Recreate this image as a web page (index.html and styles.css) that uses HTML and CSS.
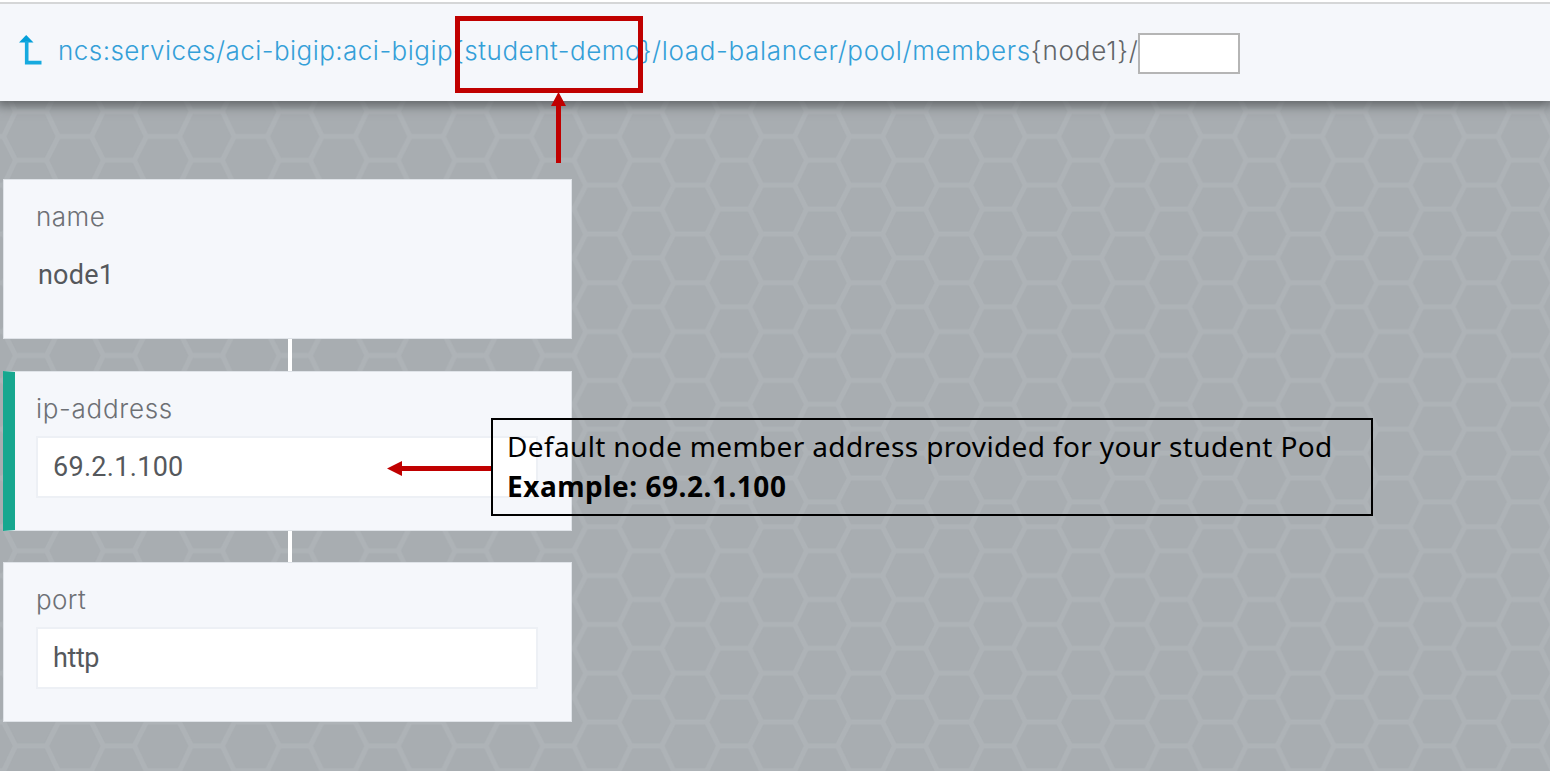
FILE: index.html
```html
<!DOCTYPE html>
<html lang="en">
<head>
<meta charset="utf-8">
<title>members node1</title>
<link rel="stylesheet" href="styles.css">
</head>
<body>
<div class="page">
  <svg class="honeycomb" width="1550" height="771" aria-hidden="true">
    <defs>
      <pattern id="hex" x="-12.95" y="160.3" width="87.9" height="48.8" patternUnits="userSpaceOnUse">
        <path d="M28.5 0H59.4M28.5 48.8H59.4M28.5 0L16.5 25L28.5 48.8M59.4 0L71.4 25L59.4 48.8M0 25H16.5M71.4 25H87.9" fill="none" stroke="#aeb3b7" stroke-width="5"/>
      </pattern>
    </defs>
    <rect width="1550" height="771" fill="url(#hex)"/>
  </svg>
  <header class="topbar">
    <svg class="up" width="24" height="32" viewBox="0 0 24 32"><path d="M0 7.5L7.2 0L14.5 7.5Z" fill="#049fd9"/><path d="M7.7 6V27.6H22.5" fill="none" stroke="#16aadf" stroke-width="3.6"/></svg>
    <div class="path"><a class="link l1">ncs:services/aci-bigip:aci-bigip</a><a class="link l2">{student-demo}</a><a class="link l3">/load-balancer/pool/members</a><span class="current">{node1}/</span></div>
    <input class="entry" aria-label="path">
  </header>
  <main class="cards">
    <section class="card">
      <div class="label name">name</div>
      <div class="value plain">node1</div>
    </section>
    <div class="connector"></div>
    <section class="card changed">
      <div class="label ip">ip-address</div>
      <div class="value field"><span class="address">69.2.1.100</span></div>
    </section>
    <div class="connector"></div>
    <section class="card">
      <div class="label port">port</div>
      <div class="value field"><span class="http">http</span></div>
    </section>
  </main>
  <div class="highlight"></div>
  <svg class="arrow-up" width="15" height="72" viewBox="0 0 15 72"><path d="M7.5 0L15 14H10V71H5V14H0Z" fill="#c00000"/></svg>
  <svg class="arrow-left" width="105" height="15" viewBox="0 0 105 15"><path d="M0 7.5L15 0V5H105V10H15V15Z" fill="#c00000"/></svg>
  <div class="note">
    <div><span class="note-text">Default node member address provided for your student Pod</span></div>
    <div><b class="note-example">Example: 69.2.1.100</b></div>
  </div>
</div>
</body>
</html>
```
FILE: styles.css
```css
* { box-sizing: border-box; }
body { margin: 0; }
.page { position: relative; width: 1550px; height: 771px; overflow: hidden; background: #a8adb1; font-family: Inter, "Liberation Sans", sans-serif; }
.honeycomb { position: absolute; inset: 0; filter: blur(0.7px); }
.topbar { position: relative; display: flex; align-items: flex-start; height: 101px; padding-left: 19px; background: linear-gradient(#fff 0 2px, #d5d6d7 2px 4px, #f5f7fb 4px); box-shadow: 0 2px 10px 3px rgba(70, 72, 76, .7); }
.up { flex: none; margin-top: 35px; }
.path { width: 1080px; margin: 32px 0 0 15px; white-space: nowrap; font-size: 26px; line-height: 38px; font-weight: 300; }
.link { color: #349fd8; }
.l1 { letter-spacing: .46px; }
.l2 { letter-spacing: .52px; }
.l3 { letter-spacing: .66px; }
.current { color: #626569; letter-spacing: .8px; }
.entry { width: 102px; height: 41px; margin-top: 33px; padding: 0; border: 2px solid #b5b5b5; background: #fff; }
.cards { position: relative; width: 569px; margin: 78px 0 0 3px; }
.card { height: 160px; padding: 21px 32px 0; background: #f5f7fb; border: 1px solid #dfe3e8; }
.changed { border-left: 12px solid #17a78f; padding-left: 21px; }
.label { height: 32px; line-height: 32px; font-size: 26px; font-weight: 300; color: #6d7075; }
.name { letter-spacing: .5px; }
.ip { letter-spacing: .7px; }
.port { letter-spacing: .4px; }
.value { font-family: Roboto, "Liberation Sans", sans-serif; font-size: 27px; color: #55585c; }
.plain { margin: 25px 0 0 2px; line-height: 34px; letter-spacing: .2px; }
.field { width: 502px; height: 62px; margin-top: 11px; border: 2px solid #edf0f5; background: #fff; padding-left: 15px; line-height: 59px; }
.address { letter-spacing: .3px; }
.http { letter-spacing: -.4px; }
.connector { width: 4px; height: 31.5px; margin-left: 285px; background: #fff; }
.highlight { position: absolute; left: 455px; top: 16px; width: 188px; height: 77px; border: 5px solid #c00000; }
.arrow-up { position: absolute; left: 551px; top: 92px; }
.arrow-left { position: absolute; left: 387px; top: 461px; }
.note { position: absolute; left: 491px; top: 418px; width: 882px; height: 98px; border: 2px solid #000; padding: 6px 14px; color: #000; font-family: "Noto Sans", sans-serif; font-size: 28px; line-height: 40px; white-space: nowrap; }
.note-text { letter-spacing: .36px; }
.note-example { letter-spacing: .52px; }
```
